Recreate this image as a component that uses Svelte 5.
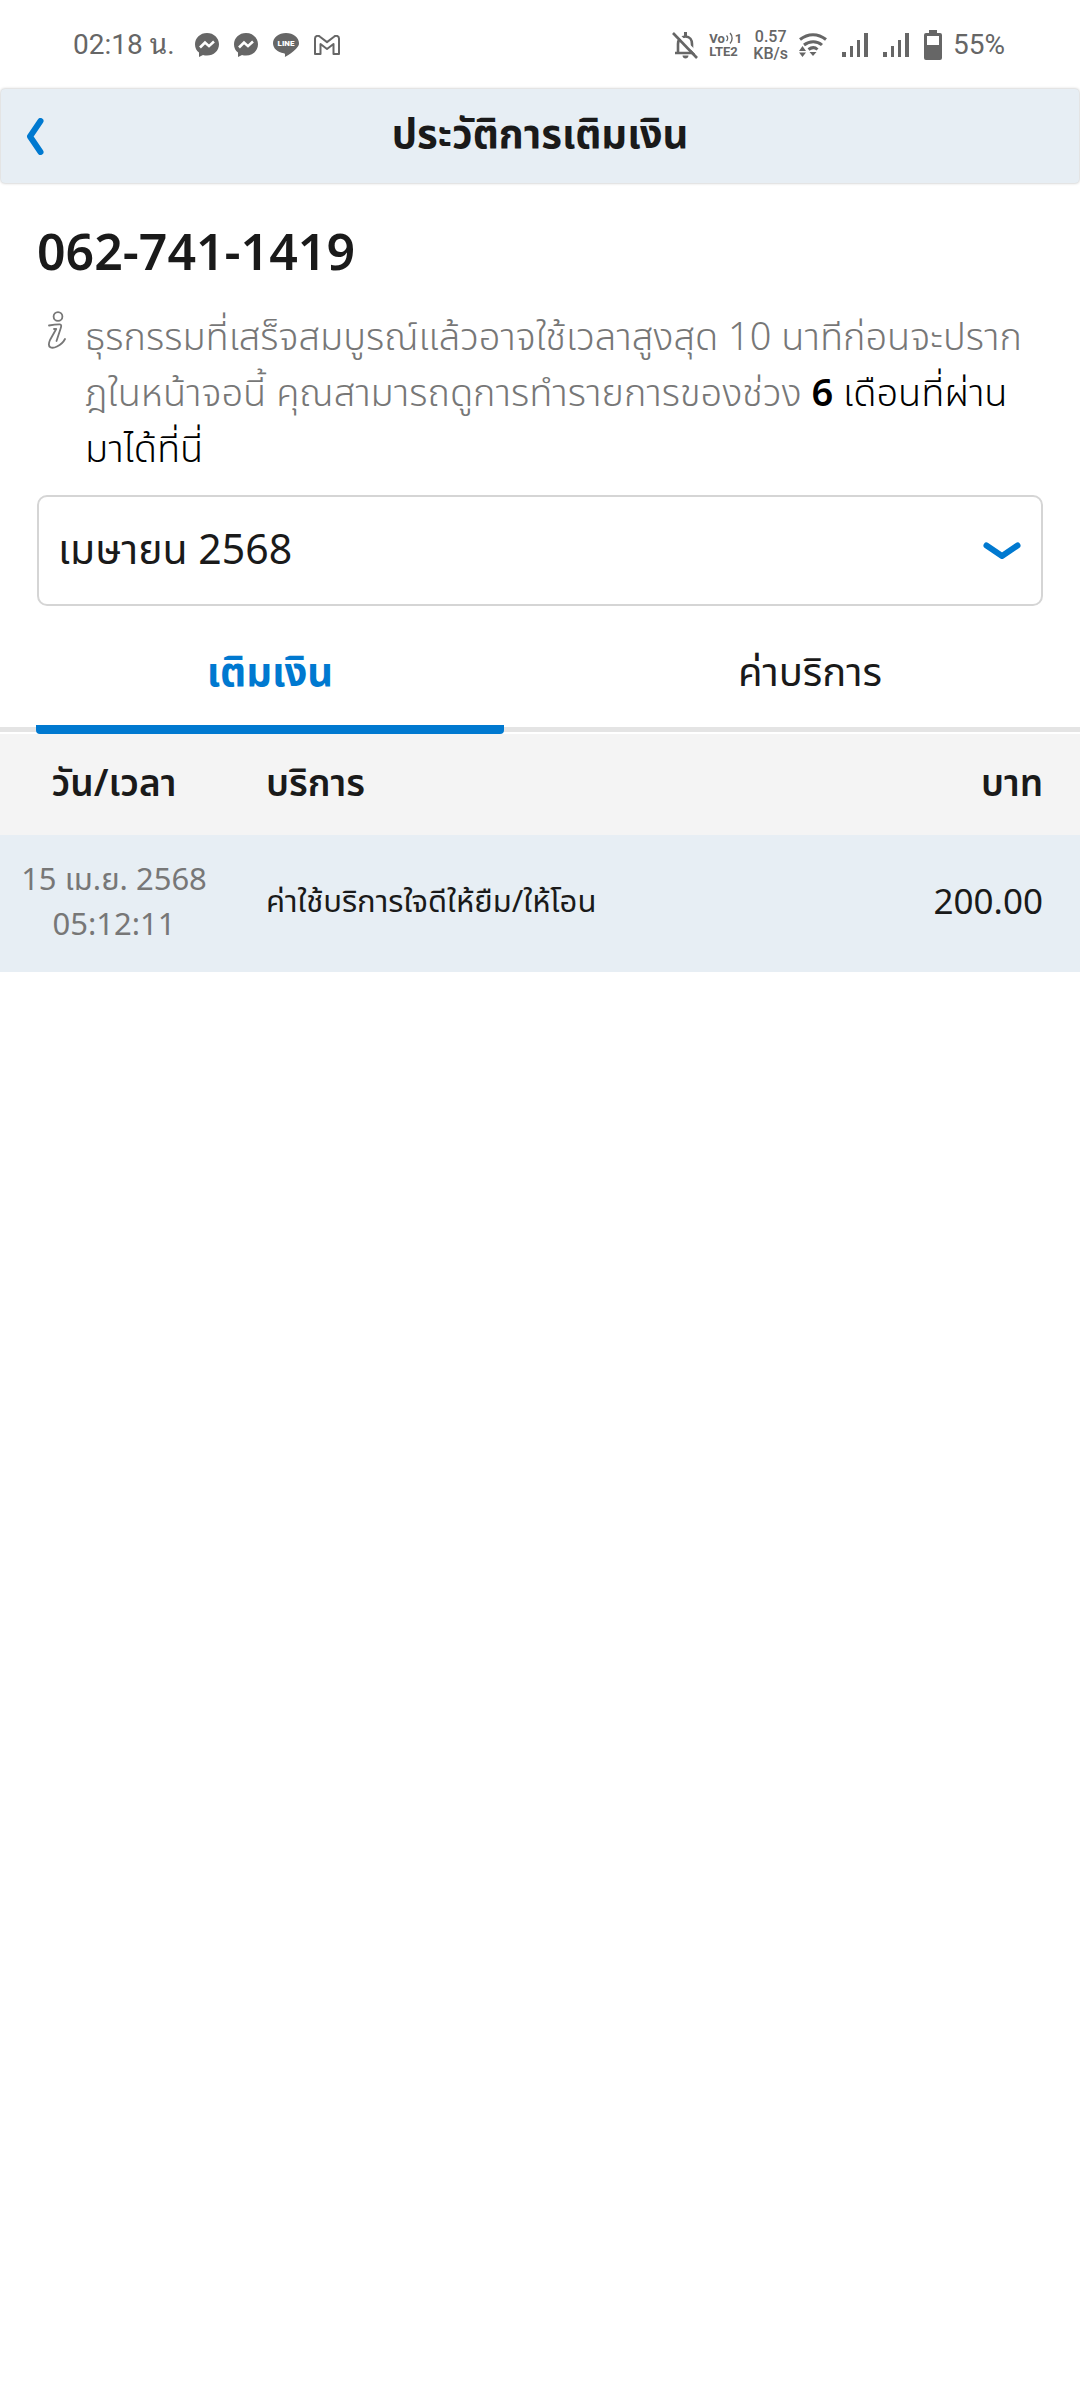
<script lang="ts">
  type Item = { date: string; time: string; service: string; amount: string };

  const months = ['เมษายน 2568', 'มีนาคม 2568', 'กุมภาพันธ์ 2568'];
  const tabs = ['เติมเงิน', 'ค่าบริการ'];
  const items: Item[] = [
    { date: '15 เม.ย. 2568', time: '05:12:11', service: 'ค่าใช้บริการใจดีให้ยืม/ให้โอน', amount: '200.00' },
  ];

  let month = $state(months[0]);
  let active = $state(0);
</script>

{#snippet messenger()}
  <svg width="24" height="24" viewBox="0 0 24 24" aria-hidden="true">
    <path fill="#666" d="M12 0C5.200 0 0 4.900 0 11.300c0 3.400 1.400 6.300 4 8.300V24l4-2c1.200.4 2.600.6 4 .6 6.800 0 12-4.900 12-11.300S18.800 0 12 0z" />
    <path fill="none" stroke="#fff" stroke-width="2.600" stroke-linejoin="miter" d="M5 14.500l5-5 4 3.600 5-4.600" />
  </svg>
{/snippet}

{#snippet signal()}
  <svg width="26" height="24" viewBox="0 0 26 24" aria-hidden="true">
    <path fill="#666" d="M0 19h4v5H0zM8 13h3v11H8zM15 7h3v17h-3zM22 0h4v24h-4z" />
  </svg>
{/snippet}

<div class="status">
  <div class="left">
    <span class="clock">02:18 น.</span>
    {@render messenger()}
    {@render messenger()}
    <svg width="26" height="24" viewBox="0 0 26 24" aria-hidden="true">
      <path fill="#666" d="M13 0C5.800 0 0 4.600 0 10.300c0 5 4.600 9.200 10.800 10 1.500.3 1.300 1.300 1.100 3.700 4-2.100 8.400-5.200 11.200-8.300 1.900-1.900 2.900-3.500 2.900-5.400C26 4.600 20.200 0 13 0z" />
      <text x="13" y="13" text-anchor="middle" class="line-text">LINE</text>
    </svg>
    <svg width="26" height="20" viewBox="0 0 26 20" aria-hidden="true">
      <path fill="none" stroke="#666" stroke-width="2" stroke-linejoin="round" d="M1 3.500C1 1 4 0 6 1.700l7 5.400 7-5.400C22 0 25 1 25 3.500V19h-5.500V9L13 14 6.500 9v10H1z" />
    </svg>
  </div>
  <div class="right">
    <div class="group">
      <svg width="26" height="28" viewBox="0 0 26 28" aria-hidden="true">
        <path fill="none" stroke="#666" stroke-width="2.600" d="M3 22h20M6 21v-8c0-4 3-7.500 7.500-7.500S20 9 20 13v8" />
        <path fill="#666" d="M12 1h3v4h-3zM10.500 24.500h6c0 4-6 4-6 0z" />
        <path stroke="#fff" stroke-width="3" d="M3.500 1.200l22 22" />
        <path stroke="#666" stroke-width="2.600" d="M1 2l24 25" />
      </svg>
      <div class="volte">
        <span class="vo">Vo<svg width="8" height="12" viewBox="0 0 8 12" aria-hidden="true"><path fill="none" stroke="#666" stroke-width="1.400" d="M.5 3.500c1.500 1.500 1.500 4 0 5.500M4 1c2.800 3 2.800 7.500 0 10.500" /></svg>1</span>
        <span>LTE2</span>
      </div>
      <div class="speed"><span>0.57</span><span>KB/s</span></div>
      <svg width="28" height="24" viewBox="0 0 28 24" aria-hidden="true">
        <path fill="none" stroke="#666" stroke-width="3" d="M1 6.500c8-6.500 18-6.500 26 0M5 12c5.500-4.500 13-4.500 18 0M9.500 16.500c3-2.300 6.500-2.300 9 0" />
        <path fill="#666" d="M10.500 19h7L14 23zM0 18l3.500-5L7 18zM0 19.500h7L3.500 24z" />
      </svg>
    </div>
    {@render signal()}
    {@render signal()}
    <div class="group">
      <svg width="18" height="30" viewBox="0 0 18 30" aria-hidden="true">
        <path fill="#666" fill-rule="evenodd" d="M5 0h8v3h3a2 2 0 0 1 2 2v23a2 2 0 0 1-2 2H2a2 2 0 0 1-2-2V5a2 2 0 0 1 2-2h3zM3 6v9h12V6z" />
      </svg>
      <span class="percent">55%</span>
    </div>
  </div>
</div>

<header>
  <button class="back" aria-label="ย้อนกลับ">
    <svg width="18" height="37" viewBox="0 0 18 37" aria-hidden="true">
      <path fill="none" stroke="#0079d0" stroke-width="6" stroke-linecap="round" stroke-linejoin="round" d="M14.500 3L4 18.500 14.500 34" />
    </svg>
  </button>
  <h1>ประวัติการเติมเงิน</h1>
</header>

<main>
  <section class="intro">
    <h2>062-741-1419</h2>
    <div class="note">
      <svg width="20" height="38" viewBox="0 0 20 38" aria-hidden="true">
        <g fill="none" stroke="#777" stroke-width="1.800" stroke-linecap="round" stroke-linejoin="round">
          <circle cx="11" cy="5.500" r="4.400" />
          <path d="M2 14.500c4-.8 8-1.300 11-1.200 1.800.1 1.200 2.500.7 4L9.500 30M7 18h2.200L3 29c-3.500 8 2 9 7 6.500 4-2 6.500-4.500 8-7.500" />
        </g>
      </svg>
      <p>
        ธุรกรรมที่เสร็จสมบูรณ์แล้วอาจใช้เวลาสูงสุด 10 นาทีก่อนจะปราก<br />ฎในหน้าจอนี้ คุณสามารถดูการทำรายการของช่วง
        <span class="strong"><b>6</b> เดือนที่ผ่าน<br />มาได้ที่นี่</span>
      </p>
    </div>
    <div class="picker">
      <select bind:value={month} aria-label="เดือน">
        {#each months as m}
          <option value={m}>{m}</option>
        {/each}
      </select>
      <svg width="38" height="18" viewBox="0 0 38 18" aria-hidden="true">
        <path fill="none" stroke="#0079d0" stroke-width="6" stroke-linecap="round" stroke-linejoin="round" d="M3.500 3.500L19 14 34.500 3.500" />
      </svg>
    </div>
  </section>

  <nav>
    {#each tabs as tab, i}
      <button class="tab" class:active={active === i} onclick={() => active = i}>{tab}</button>
    {/each}
  </nav>

  <table>
    <thead>
      <tr>
        <th class="when">วัน/เวลา</th>
        <th>บริการ</th>
        <th class="amount">บาท</th>
      </tr>
    </thead>
    <tbody>
      {#each items as item}
        <tr>
          <td class="when">{item.date}<br />{item.time}</td>
          <td class="service">{item.service}</td>
          <td class="amount">{item.amount}</td>
        </tr>
      {/each}
    </tbody>
  </table>
</main>

<style>
  :global(body) {
    margin: 0;
    background: #fff;
    color: #1a1a1a;
    font-family: "Noto Sans", "Noto Sans Thai", sans-serif;
  }
  button, select {
    font-family: inherit;
    color: inherit;
    background: transparent;
    border: 0;
    padding: 0;
    cursor: pointer;
  }
  svg { flex: none; display: block; }

  .status {
    display: flex;
    justify-content: space-between;
    height: 89px;
    padding: 0 75px 0 73px;
    color: #666;
    font-family: Roboto, "Noto Sans Thai Looped", "Noto Sans Thai", sans-serif;
  }
  .left, .right, .group {
    display: flex;
    align-items: center;
  }
  .left { gap: 15px; }
  .right { gap: 15px; }
  .group { gap: 11px; }
  .clock, .percent { font-size: 28px; line-height: 32px; white-space: nowrap; }
  .clock { margin-right: 5px; }
  .line-text {
    font-family: Roboto, sans-serif;
    font-size: 8px;
    font-weight: 900;
    fill: #fff;
  }
  .volte, .speed {
    display: flex;
    flex-direction: column;
  }
  .volte { font-size: 13px; line-height: 13px; font-weight: 700; }
  .vo { display: flex; gap: 1px; }
  .speed { font-size: 16px; line-height: 17px; font-weight: 500; align-items: center; }

  header {
    display: grid;
    grid-template-columns: 80px 1fr 80px;
    align-items: center;
    height: 94px;
    margin: 0 1px;
    border-radius: 4px;
    background: #e7eef4;
    box-shadow: 0 0 3px rgba(0, 0, 0, 0.3);
  }
  .back {
    display: flex;
    align-self: stretch;
    align-items: center;
    padding-left: 25px;
  }
  h1 {
    margin: 0;
    padding-bottom: 6px;
    text-align: center;
    font-size: 40px;
    font-weight: 700;
    line-height: 56px;
  }

  .intro { padding: 36px 37px 0; }
  h2 {
    margin: 0;
    font-size: 50px;
    font-weight: 600;
    line-height: 64px;
  }
  .note {
    display: flex;
    align-items: flex-start;
    gap: 18px;
    padding: 24px 0 0 10px;
  }
  .note svg { margin-top: 4px; }
  .note p {
    margin: 0;
    color: #777;
    font-size: 38px;
    font-weight: 350;
    line-height: 56px;
    white-space: nowrap;
  }
  .strong { color: #000; }
  .strong b { font-weight: 600; }

  .picker {
    display: grid;
    align-items: center;
    margin-top: 20px;
  }
  .picker select, .picker svg { grid-area: 1 / 1; }
  .picker select {
    width: 100%;
    height: 111px;
    padding: 0 19px 6px;
    border: 2px solid #d5d5d5;
    border-radius: 10px;
    appearance: none;
    font-size: 41px;
  }
  .picker svg {
    justify-self: end;
    margin-right: 22px;
    pointer-events: none;
  }

  nav {
    display: grid;
    grid-template-columns: 1fr 1fr;
    gap: 72px;
    margin-top: 22px;
    padding: 0 36px;
    background: linear-gradient(#e4e4e4, #e4e4e4) 0 calc(100% - 2px) / 100% 5px no-repeat;
  }
  .tab {
    height: 106px;
    padding-bottom: 20px;
    font-size: 40px;
    line-height: 56px;
  }
  .tab.active {
    color: #0079d0;
    font-weight: 700;
    background: linear-gradient(#0079d0, #0079d0) 0 100% / 100% 9px no-repeat;
    border-radius: 4px;
  }

  table {
    width: 100%;
    border-collapse: collapse;
  }
  th, td { padding: 0; text-align: left; }
  th {
    height: 95px;
    padding-bottom: 6px;
    background: #f4f4f4;
    font-size: 37px;
    font-weight: 600;
    line-height: 48px;
  }
  td {
    height: 131px;
    padding-bottom: 6px;
    background: #e7eef4;
    font-size: 31px;
    line-height: 45px;
  }
  .when { width: 228px; text-align: center; }
  td.when { color: #777; }
  th:nth-child(2), .service { padding-left: 38px; }
  .amount { padding-right: 37px; text-align: right; }
  td.amount { font-size: 35px; }
</style>
